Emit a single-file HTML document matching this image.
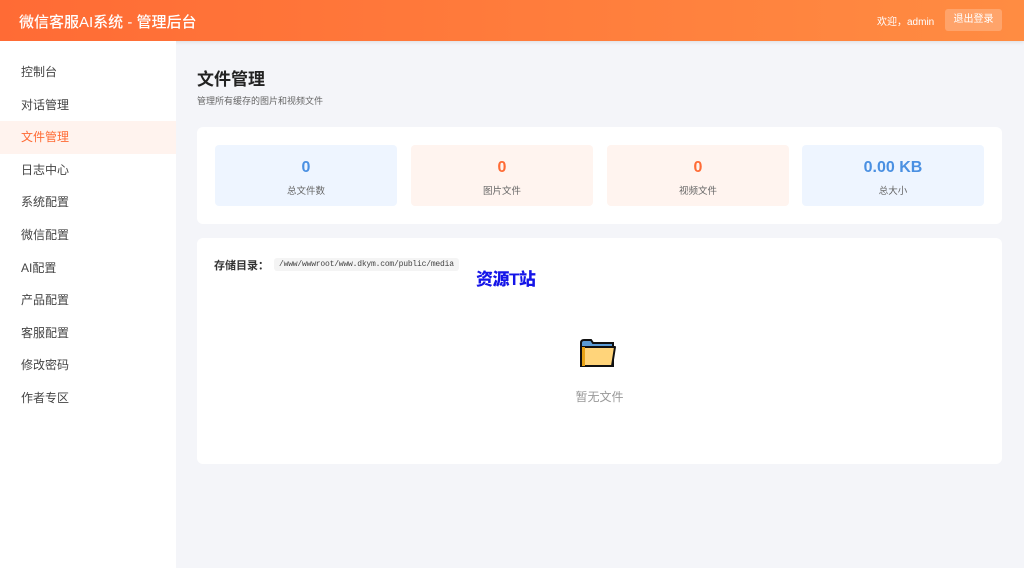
<!DOCTYPE html>
<html><head><meta charset="utf-8"><style>
*{margin:0;padding:0;box-sizing:border-box}
body{width:1024px;height:568px;overflow:hidden;background:#f4f5f9;font-family:"Liberation Sans","Noto Sans CJK SC",sans-serif;position:relative}
.hdr{position:absolute;left:0;top:0;width:1024px;height:41px;background:linear-gradient(90deg,#ff6b35,#ff8c42);color:#fff;box-shadow:0 1px 4px rgba(0,0,0,.1)}
.hdr .t{position:absolute;left:19px;top:11px;font-size:15px;font-weight:500}
.hdr .w{position:absolute;left:877px;top:13px;font-size:10px}
.hdr .b{position:absolute;left:945px;top:9px;width:57px;height:22px;background:rgba(255,255,255,.22);border-radius:3px;font-size:10px;text-align:center;line-height:22px}
.side{position:absolute;left:0;top:41px;width:176px;height:527px;background:#fff}
.side div{height:32.6px;line-height:32.6px;padding-left:21px;font-size:12px;color:#444}
.side div.a{background:#fff3ee;color:#ff6b35}
h1{position:absolute;left:197px;top:65px;font-size:17px;color:#222}
.sub{position:absolute;left:197px;top:94px;font-size:9px;color:#666}
.card{position:absolute;left:197px;background:#fff;border-radius:6px;width:805px}
.st{position:absolute;top:18px;width:182px;height:61px;border-radius:4px;text-align:center}
.st b{display:block;margin-top:14px;font-size:16px}
.st span{display:block;margin-top:6px;font-size:9.5px;color:#666}
.blue{background:#eef5ff}.blue b{color:#4a90e2}
.or{background:#fff4ef}.or b{color:#ff6b35}
</style></head><body>
<div class="hdr"><div class="t">微信客服AI系统 - 管理后台</div><div class="w">欢迎，admin</div><div class="b">退出登录</div></div>
<div class="side" style="padding-top:15px"><div>控制台</div><div>对话管理</div><div class="a">文件管理</div><div>日志中心</div><div>系统配置</div><div>微信配置</div><div>AI配置</div><div>产品配置</div><div>客服配置</div><div>修改密码</div><div>作者专区</div></div>
<h1>文件管理</h1><div class="sub">管理所有缓存的图片和视频文件</div>
<div class="card" style="top:127px;height:97px">
<div class="st blue" style="left:18px"><b>0</b><span>总文件数</span></div>
<div class="st or" style="left:214px"><b>0</b><span>图片文件</span></div>
<div class="st or" style="left:410px"><b>0</b><span>视频文件</span></div>
<div class="st blue" style="left:605px"><b>0.00 KB</b><span>总大小</span></div>
</div>
<div class="card" style="top:238px;height:226px">
<div style="position:absolute;left:17px;top:19px;font-size:11px;font-weight:bold;color:#333">存储目录：</div>
<div style="position:absolute;left:77px;top:20px;background:#f4f4f4;border-radius:3px;padding:2px 5px;font-family:'Liberation Mono',monospace;font-size:8px;letter-spacing:-0.2px;color:#444">/www/wwwroot/www.dkym.com/public/media</div>
<div style="position:absolute;left:279px;top:27px;font-size:17px;font-weight:900;color:#1515e8;letter-spacing:-0.5px">资源T站</div>
<svg style="position:absolute;left:382px;top:100px" width="40" height="32" viewBox="0 0 40 32"><path d="M2 5q0-3 3-3h7l2 3h20v23H2z" fill="#5b9bd5" stroke="#111" stroke-width="2"/><path d="M2 28V9h34l-3 19z" fill="#ffd47a" stroke="#111" stroke-width="2" stroke-linejoin="round"/><path d="M3 28V9h3v19z" fill="#e8a317"/></svg>
<div style="position:absolute;left:0;width:805px;top:150px;text-align:center;font-size:12px;color:#999">暂无文件</div>
</div>
</body></html>
